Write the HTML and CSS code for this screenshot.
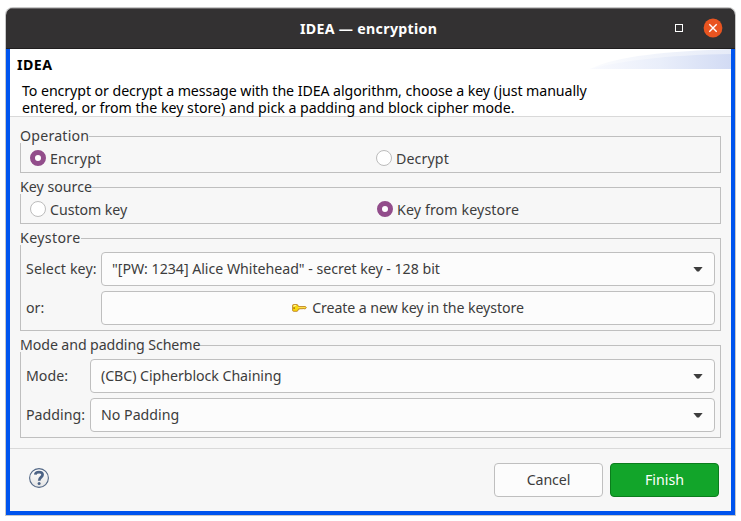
FILE: index.html
```
<!DOCTYPE html>
<html lang="en">
<head>
<meta charset="utf-8">
<title>IDEA — encryption</title>
<link rel="stylesheet" href="styles.css">
</head>
<body>
<div class="window">
  <div class="titlebar">
    <span class="title">IDEA — encryption</span>
    <span class="maximize"></span>
    <svg class="close" width="20" height="20" viewBox="0 0 20 20"><circle cx="10" cy="10" r="9.4" fill="#e95420"/><path d="M6.3 6.3l7.4 7.4M13.7 6.3l-7.4 7.4" stroke="#fff" stroke-width="1.4"/></svg>
  </div>
  <div class="content">
    <header class="header">
      <svg class="swoosh" width="141" height="20" viewBox="0 0 141 20">
        <defs>
          <linearGradient id="light"><stop offset="0" stop-color="#fbfcfe"/><stop offset="1" stop-color="#e6ebf8"/></linearGradient>
          <linearGradient id="deep"><stop offset="0" stop-color="#f9fafe"/><stop offset=".5" stop-color="#e9eefa"/><stop offset="1" stop-color="#d2dbf4"/></linearGradient>
        </defs>
        <path d="M0 20C25 7 80 2 141 0V20Z" fill="url(#light)"/>
        <path d="M0 20C30 12 75 6 141 5V20Z" fill="url(#deep)"/>
      </svg>
      <h1><span class="t-idea">IDEA</span></h1>
      <p><span class="t-desc1">To encrypt or decrypt a message with the IDEA algorithm, choose a key (just manually</span><br><span class="t-desc2">entered, or from the key store) and pick a padding and block cipher mode.</span></p>
    </header>
    <main class="form">
      <section class="group radios">
        <h2 class="t-operation">Operation</h2>
        <label><i class="radio on"></i><span class="t-encrypt">Encrypt</span></label>
        <label><i class="radio"></i><span class="t-decrypt">Decrypt</span></label>
      </section>
      <section class="group radios source">
        <h2 class="t-source">Key source</h2>
        <label><i class="radio"></i><span class="t-custom">Custom key</span></label>
        <label><i class="radio on"></i><span class="t-from">Key from keystore</span></label>
      </section>
      <section class="group fields keystore">
        <h2 class="t-keystore">Keystore</h2>
        <label><span class="t-select">Select key:</span></label>
        <div class="control combo"><span class="t-alice">"[PW: 1234] Alice Whitehead" - secret key - 128 bit</span><i class="arrow"></i></div>
        <label><span class="t-or">or:</span></label>
        <div class="control create">
          <svg width="15" height="8" viewBox="0 0 15 8"><path d="M.6 1.2Q.6.6 1.6.6H5Q6 .6 6.4 2.5H13.4L14.4 3.7 13.3 4.8H12L11 4.4 10 5 9 4.5 8 5H6.5Q6 7.3 5 7.3H1.6Q.6 7.3.6 6.3Z" fill="#f9d90e" stroke="#b57418" stroke-width=".8"/><path d="M4.2 1.5H2V3" fill="none" stroke="#fff29a"/><path d="M6 3.4H13" stroke="#ffe36a" stroke-width=".8"/><circle cx="2.1" cy="4.1" r=".8" fill="#86500d"/></svg>
          <span class="t-create">Create a new key in the keystore</span>
        </div>
      </section>
      <section class="group fields mode">
        <h2 class="t-scheme">Mode and padding Scheme</h2>
        <label><span class="t-mode">Mode:</span></label>
        <div class="control combo"><span class="t-cbc">(CBC) Cipherblock Chaining</span><i class="arrow"></i></div>
        <label><span class="t-padding">Padding:</span></label>
        <div class="control combo"><span class="t-none">No Padding</span><i class="arrow"></i></div>
      </section>
    </main>
    <footer class="footer">
      <svg class="help" width="20" height="20" viewBox="0 0 20 20"><defs><linearGradient id="disc" x2="0" y2="1"><stop offset="0" stop-color="#fff"/><stop offset="1" stop-color="#e4e4e4"/></linearGradient></defs><circle cx="10" cy="10" r="9.4" fill="url(#disc)" stroke="#536886" stroke-width="1.1"/><path d="M6.3 6.7C6.5 3.2 13.6 3.1 13.6 6.8C13.6 9.2 10.2 9.2 10.2 12.7" fill="none" stroke="#4c6385" stroke-width="2.7"/><circle cx="10.1" cy="15.6" r="1.5" fill="#4c6385"/></svg>
      <button class="control"><span class="t-cancel">Cancel</span></button>
      <button class="control finish"><span class="t-finish">Finish</span></button>
    </footer>
  </div>
</div>
</body>
</html>
```
FILE: styles.css
```
* { box-sizing: border-box; }
body { margin: 0; padding: 8px 6px; background: #fff; font: 14.2px/18px "Noto Sans", sans-serif; color: #3d3d3d; }
h1, h2, p { margin: 0; font: inherit; }
span { white-space: nowrap; }
.window { width: 729px; height: 507px; border-radius: 7px 7px 0 0; overflow: hidden; box-shadow: 0 0 0 1px #c8c8c8; }
.titlebar { height: 41px; display: grid; grid-template-columns: 1fr 137px 1fr; align-items: center; background: #333132; border-top: 1px solid #686667; border-bottom: 1px solid #201e1f; color: #fff; font-weight: 700; position: relative; }
.title { grid-column: 2; margin-left: -2px; letter-spacing: .3px; }
.maximize { position: absolute; left: 669px; top: 15px; width: 8px; height: 8px; border: 1px solid #fff; }
.close { position: absolute; left: 697px; top: 9px; }
.content { height: 466px; border: 4px solid #0054ee; border-top: 0; background: #f7f7f7; display: flex; flex-direction: column; }
.header { height: 68px; padding: 7px 7px 0; background: #fff; border-bottom: 1px solid #d9d9d9; color: #000; position: relative; }
.swoosh { position: absolute; right: 0; top: 0; }
h1 { font-weight: 700; height: 18px; }
p { padding: 8px 0 0 5px; line-height: 17px; }
.form { height: 332px; padding: 19px 10px 0; border-bottom: 1px solid #d9d9d9; }
.group { border: 1px solid #bfbfbf; position: relative; margin-bottom: 14px; }
h2 { position: absolute; left: -1px; top: -10px; height: 16px; background: #f7f7f7; white-space: nowrap; }
.radios { height: 37px; padding: 5px 9px 0; display: grid; grid-template-columns: 346px 1fr; }
.source { grid-template-columns: 347px 1fr; }
.radios label { display: flex; height: 34px; gap: 4px; }
.radio { flex: none; width: 16px; height: 16px; margin-top: 8px; border: 1px solid #bcbcbc; border-radius: 50%; background: #fff; }
.radio.on { border: 5px solid #924d8b; }
.radios label span { padding-top: 8px; }
.fields { height: 93px; padding: 13px 5px 0; display: grid; grid-template-columns: 75px 614px; grid-auto-rows: 34px; row-gap: 5px; align-items: center; }
.mode { grid-template-columns: 64px 625px; }
.control { height: 34px; border: 1px solid #bfbfbf; border-radius: 4px; background: #fcfcfc; display: flex; align-items: center; font: inherit; color: inherit; }
.combo { justify-content: space-between; padding: 0 11px 0 10px; }
.arrow { width: 10px; height: 5px; background: #3d3d3d; clip-path: polygon(0 0, 100% 0, 60% 100%, 40% 100%); }
.create { justify-content: center; gap: 5px; }
.footer { flex: 1; padding: 14px 12px 0 19px; display: flex; gap: 7px; }
.help { margin: 5px auto 0 0; }
.footer .control { width: 109px; justify-content: center; padding: 0; }
.footer .finish { background: #12a52a; border-color: #0b7d1c; color: #fff; }

/* Tracking per label */
.t-idea { letter-spacing: .45px; }
.t-desc1 { letter-spacing: -.07px; }
.t-desc2 { letter-spacing: -.02px; }
.t-operation { letter-spacing: .2px; }
.t-encrypt, .t-decrypt, .t-from, .t-select { letter-spacing: .12px; }
.t-custom { letter-spacing: -.05px; }
.t-keystore { letter-spacing: .35px; }
.t-alice { letter-spacing: -.03px; }
.t-create { letter-spacing: -.1px; }
.t-scheme { letter-spacing: -.1px; }
.t-cbc { letter-spacing: -.05px; }
.t-cancel { letter-spacing: -.1px; }
```
